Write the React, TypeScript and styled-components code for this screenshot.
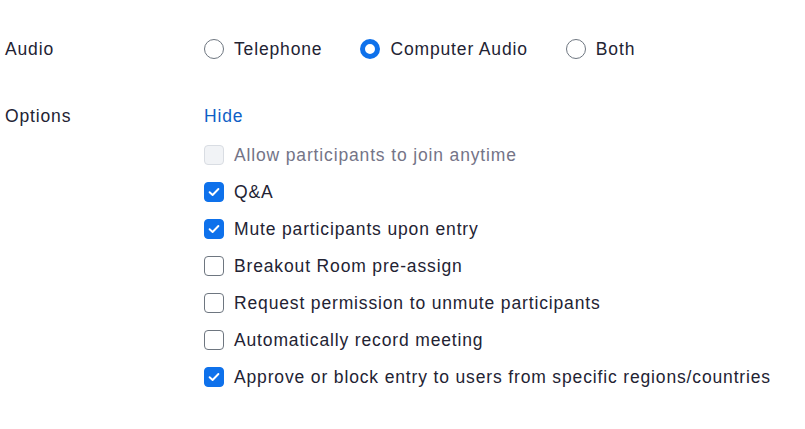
import React from "react";
import styled, { createGlobalStyle } from "styled-components";

const Global = createGlobalStyle`
  html, body { margin: 0; padding: 0; background: #ffffff; }
  body {
    font-family: "Liberation Sans", Arial, sans-serif;
    color: #232333;
    -webkit-font-smoothing: antialiased;
  }
`;

const Page = styled.div`
  padding: 37px 0 0 5px;
  display: flex;
  flex-direction: column;
  gap: 43px;
`;

const Field = styled.div`
  display: grid;
  grid-template-columns: 199px 1fr;
  align-items: start;
`;

const Label = styled.div`
  font-size: 17.5px;
  letter-spacing: 0.85px;
  line-height: 24px;
  color: #232333;
`;

const RadioGroup = styled.div`
  display: flex;
  align-items: center;
  gap: 38px;
  height: 24px;
`;

const Option = styled.label<{ $disabled?: boolean }>`
  display: flex;
  align-items: center;
  gap: 10px;
  font-size: 17.5px;
  letter-spacing: 0.85px;
  line-height: 24px;
  color: ${(p) => (p.$disabled ? "#747487" : "#232333")};
  cursor: pointer;
`;

const RadioDot = styled.span<{ $checked?: boolean }>`
  box-sizing: border-box;
  width: 20px;
  height: 20px;
  border-radius: 50%;
  flex: none;
  background: #fff;
  border: ${(p) => (p.$checked ? "5.5px solid #0e71eb" : "1px solid #6e7680")};
`;

const Box = styled.span<{ $checked?: boolean; $disabled?: boolean }>`
  box-sizing: border-box;
  width: 20px;
  height: 20px;
  flex: none;
  border-radius: 4px;
  display: flex;
  align-items: center;
  justify-content: center;
  background: ${(p) => (p.$checked ? "#0e71eb" : p.$disabled ? "#f1f3f6" : "#fff")};
  border: 1px solid
    ${(p) => (p.$checked ? "#0e71eb" : p.$disabled ? "#d9dde3" : "#6e7680")};
`;

const Content = styled.div`
  display: flex;
  flex-direction: column;
`;

const HideLink = styled.a`
  font-size: 17.5px;
  letter-spacing: 0.85px;
  line-height: 24px;
  color: #0e5fc6;
  text-decoration: none;
  margin-bottom: 8px;
  align-self: flex-start;
  cursor: pointer;
`;

const CheckList = styled.div`
  display: flex;
  flex-direction: column;
`;

const CheckRow = styled(Option)`
  height: 37px;
`;

const Check = () => (
  <svg width="12" height="10" viewBox="0 0 12 10" fill="none">
    <path d="M1.6 5.2 L4.6 8 L10.4 2" stroke="#fff" strokeWidth="1.9" strokeLinecap="round" strokeLinejoin="round" />
  </svg>
);

const options = [
  { text: "Allow participants to join anytime", checked: false, disabled: true },
  { text: "Q&A", checked: true },
  { text: "Mute participants upon entry", checked: true },
  { text: "Breakout Room pre-assign", checked: false },
  { text: "Request permission to unmute participants", checked: false },
  { text: "Automatically record meeting", checked: false },
  { text: "Approve or block entry to users from specific regions/countries", checked: true },
];

export default function App() {
  return (
    <>
      <Global />
      <Page>
        <Field>
          <Label>Audio</Label>
          <RadioGroup>
            <Option>
              <RadioDot />
              Telephone
            </Option>
            <Option>
              <RadioDot $checked />
              Computer Audio
            </Option>
            <Option>
              <RadioDot />
              Both
            </Option>
          </RadioGroup>
        </Field>
        <Field>
          <Label>Options</Label>
          <Content>
            <HideLink>Hide</HideLink>
            <CheckList>
              {options.map((o) => (
                <CheckRow key={o.text} $disabled={o.disabled}>
                  <Box $checked={o.checked} $disabled={o.disabled}>
                    {o.checked && <Check />}
                  </Box>
                  {o.text}
                </CheckRow>
              ))}
            </CheckList>
          </Content>
        </Field>
      </Page>
    </>
  );
}
